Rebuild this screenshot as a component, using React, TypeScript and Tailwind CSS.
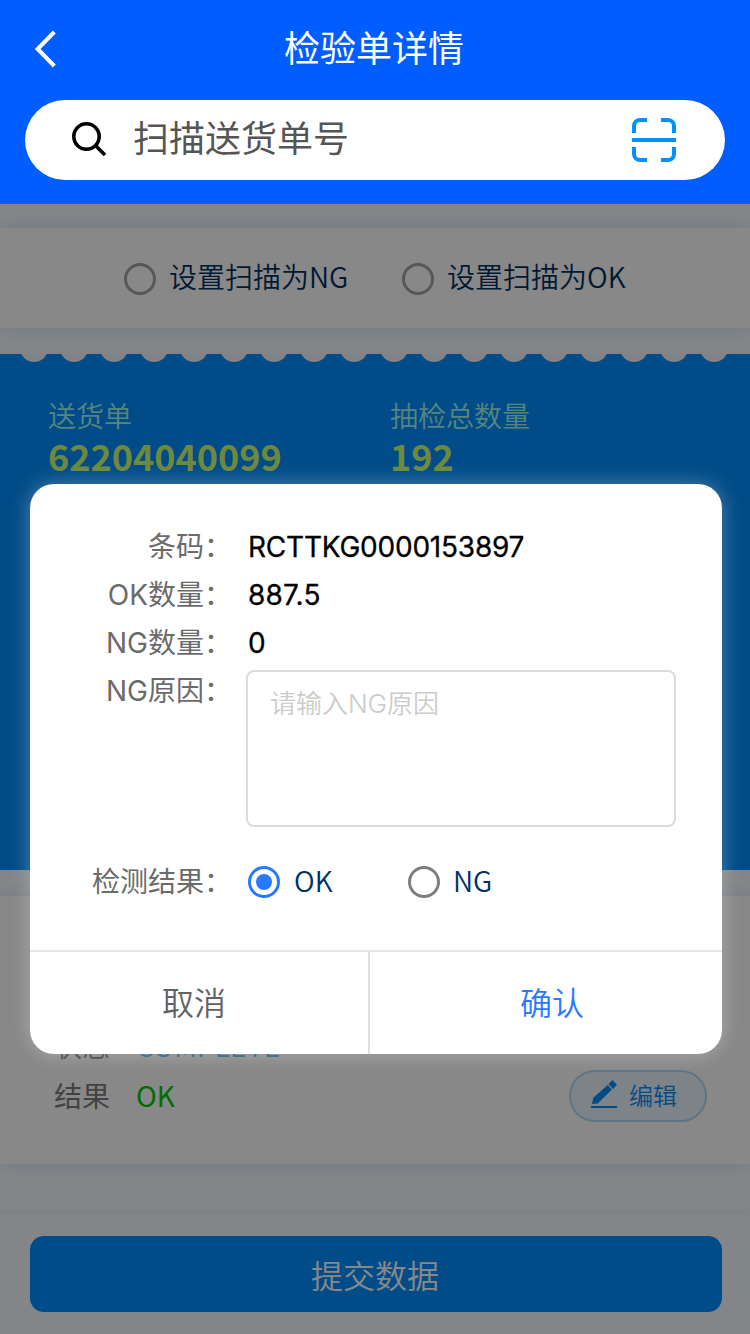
import { ReactNode } from "react";

const CJK = "font-['Noto_Sans_CJK_SC',sans-serif]";

function Radio({ checked = false, className = "" }: { checked?: boolean; className?: string }) {
  return (
    <span
      className={`flex size-8 shrink-0 items-center justify-center rounded-full border-[3px] ${checked ? "border-[#2979ff]" : "border-[#7d7d7d]"} ${className}`}
    >
      {checked && <span className="size-4 rounded-full bg-[#2979ff]" />}
    </span>
  );
}

function Header() {
  return (
    <header className="flex h-[204px] shrink-0 flex-col bg-[#005dff]">
      <div className="grid h-[100px] grid-cols-[100px_1fr_100px] items-center">
        <svg className="ml-[34px] -mt-0.5" width="24" height="38" viewBox="0 0 24 38" fill="none" stroke="#fff" strokeWidth="4">
          <path d="M20.3 2 L3.6 19 L20.3 36" />
        </svg>
        <h1 className="-mt-2 -ml-[2px] text-center text-[36px] leading-[52px] font-normal text-white">检验单详情</h1>
      </div>
      <div className="mx-[25px] flex h-20 items-center rounded-full bg-white pr-[49px] pl-[46px]">
        <svg width="36" height="36" viewBox="0 0 36 36" fill="none" stroke="#000" strokeWidth="3.6">
          <circle cx="15.5" cy="14.5" r="12.7" />
          <path d="M24.2 23.2 L34 33" />
        </svg>
        <span className="-mt-2 ml-[26px] flex-1 text-[36px] leading-[52px] text-[#555]">扫描送货单号</span>
        <svg width="44" height="44" viewBox="0 0 44 44" fill="none" stroke="#0091ff" strokeWidth="4">
          <path d="M2 15V8a6 6 0 0 1 6-6h7M29 2h7a6 6 0 0 1 6 6v7M42 29v7a6 6 0 0 1-6 6h-7M15 42H8a6 6 0 0 1-6-6v-7M0 22h44" />
        </svg>
      </div>
    </header>
  );
}

function ScanOption({ children }: { children: ReactNode }) {
  return (
    <div className="flex w-[226px] items-center whitespace-nowrap">
      <Radio className="mt-0.5 opacity-70" />
      <span className="-mt-1 ml-[13px] text-[28px] leading-10 font-[350] text-[#003262]">{children}</span>
    </div>
  );
}

function Ticket() {
  return (
    <section className="h-[516px] shrink-0 bg-[#008fff]">
      <svg className="block" width="750" height="8" viewBox="0 0 750 8">
        {Array.from({ length: 18 }, (_, i) => (
          <circle key={i} cx={34 + i * 40} cy={-6} r={14} fill="#f2f6fb" />
        ))}
      </svg>
      <div className="grid grid-cols-[342px_1fr] px-12 pt-[33px]">
        <span className="text-[28px] leading-[40px] font-[350] text-[#a3f7ee]">送货单</span>
        <span className="text-[28px] leading-[40px] font-[350] text-[#a3f7ee]">抽检总数量</span>
        <span className="text-[36px] leading-[40px] font-bold text-[#cfff74]">62204040099</span>
        <span className="text-[36px] leading-[40px] font-bold text-[#cfff74]">192</span>
      </div>
    </section>
  );
}

function FormRow({ label, children }: { label: string; children: ReactNode }) {
  return (
    <div className="flex min-h-12 text-[28px] leading-[48px]">
      <span className="w-[202px] shrink-0 text-right text-[#6b6b6b]">{label}</span>
      <div className="ml-4 flex-1 text-black">{children}</div>
    </div>
  );
}

function Dialog() {
  return (
    <div className="absolute top-[484px] left-[30px] flex h-[570px] w-[692px] flex-col overflow-hidden rounded-[24px] bg-white shadow-[0_0_20px_rgba(255,255,255,0.3)]">
      <div className="flex h-[466px] shrink-0 flex-col pt-[39px] font-[Inter,'Noto_Sans_CJK_SC',sans-serif]">
        <FormRow label="条码：">
          <p className="tracking-[-0.22px] [-webkit-text-stroke:0.3px_black]">RCTTKG0000153897</p>
        </FormRow>
        <FormRow label="OK数量：">
          <p className="tracking-[0.2px] [-webkit-text-stroke:0.3px_black]">887.5</p>
        </FormRow>
        <FormRow label="NG数量：">
          <p className="[-webkit-text-stroke:0.3px_black]">0</p>
        </FormRow>
        <FormRow label="NG原因：">
          <div className="mt-[3px] -ml-0.5 h-[157px] w-[430px] rounded-lg border-2 border-[#dcdcdc] px-[22px] pt-2 text-[26px] font-[350] text-[#ccc]">
            请输入NG原因
          </div>
        </FormRow>
        <div className="mt-[31px]">
          <FormRow label="检测结果：">
            <div className={`flex h-12 items-center text-[28px] font-[350] text-[#003262] ${CJK}`}>
              <Radio checked />
              <span className="-mt-1 ml-3.5 w-[114px]">OK</span>
              <Radio />
              <span className="-mt-1 ml-[13px]">NG</span>
            </div>
          </FormRow>
        </div>
      </div>
      <div className="flex flex-1 border-t-2 border-[#e6e6e6] text-[32px] font-[350]">
        <button className="w-[340px] border-r-2 border-[#e0e0e0] pr-[10px] pb-[5px] text-[#606266]">取消</button>
        <button className="flex-1 pb-[5px] pl-[12px] text-[#2979ff]">确认</button>
      </div>
    </div>
  );
}

export default function App() {
  return (
    <div className={`relative flex h-[1334px] w-[750px] flex-col overflow-hidden bg-[#f8faff] ${CJK}`}>
      <Header />
      <section className="mt-6 flex h-[100px] shrink-0 items-center gap-[52px] bg-white pl-[124px] shadow-[0_0_20px_rgba(0,140,190,0.18)]">
        <ScanOption>设置扫描为NG</ScanOption>
        <ScanOption>设置扫描为OK</ScanOption>
      </section>
      <div className="h-[26px] shrink-0" />
      <Ticket />
      <section className="mt-[26px] h-[268px] shrink-0 bg-white px-[54px] pt-[126px] shadow-[0_0_20px_rgba(0,140,190,0.18)]">
        <div className="flex h-12 items-center pb-[3px] text-[28px] font-[350] text-[#7d7d7d]">
          <span className="w-[82px]">状态</span>
          <span className="tracking-[0.3px] text-[#4fb4e8]">COMPLETE</span>
        </div>
        <div className="-mr-[11px] flex h-[52px] items-center text-[28px] text-[#7d7d7d]">
          <span className="-mt-[3px] w-[82px]">结果</span>
          <span className="-mt-[3px] flex-1 text-[#00cc00]">OK</span>
          <span className="flex h-[52px] w-[138px] items-center rounded-full border-2 border-[#b2d9f8] bg-[#edf6fd] pl-5 text-[24px] font-[350] text-[#008fff]">
            <svg width="26" height="34" viewBox="0 0 26 34" fill="#008fff">
              <path d="M1 25L2.3 18.8L16.7 6.1L21 10.4L6.7 24.6ZM17.5 5.3L21.4 1L26 5.8L22.2 9.9Z" />
              <path d="M0 27H26V29H0Z" />
            </svg>
            <span className="-mt-[3px] ml-3">编辑</span>
          </span>
        </div>
      </section>
      <footer className="mt-[50px] h-[120px] shrink-0 bg-[#f8f9ff] pt-[22px] pl-[30px] shadow-[0_0_12px_rgba(0,0,0,0.08)]">
        <button className="h-[76px] w-[692px] rounded-[14px] bg-[#008fff] pr-0.5 text-[32px] font-[350] text-white">提交数据</button>
      </footer>
      <div className="absolute inset-x-0 top-[204px] bottom-0 bg-black/[0.467]" />
      <Dialog />
    </div>
  );
}
